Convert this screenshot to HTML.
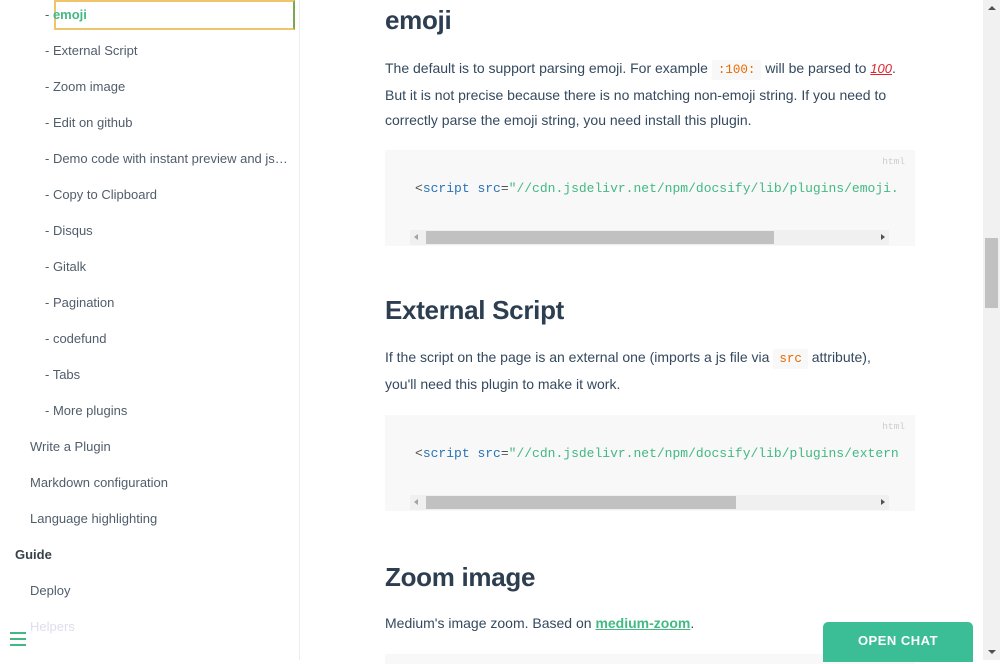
<!DOCTYPE html>
<html><head><meta charset="utf-8"><style>
*{margin:0;padding:0;box-sizing:border-box}
body{width:1000px;height:660px;overflow:hidden;background:#fff;font-family:"Liberation Sans",sans-serif;color:#34495e;position:relative}
.sb{position:absolute;left:0;top:0;width:300px;height:660px;border-right:1px solid #eee}
.it{position:absolute;font-size:13px;color:#505d6b;white-space:nowrap;line-height:16px}
.it.sub{left:45px}
.it.l2{left:30px}
.sel{position:absolute;left:54px;top:0;width:241px;height:30px;border:2px solid #f0c46b;border-right:2px solid #7aa850}
h2{position:absolute;left:385px;font-size:26px;font-weight:bold;color:#2c3e50;line-height:32px;letter-spacing:-0.3px}
p{position:absolute;left:385px;width:530px;font-size:14px;line-height:25px;color:#34495e}
code{font-family:"Liberation Mono",monospace;font-size:12.5px;color:#e96900;background:#f8f8f8;padding:3px 6px;border-radius:2px}
.pre{position:absolute;left:385px;width:530px;background:#f8f8f8}
.lang{position:absolute;right:10px;top:6px;font-size:9.5px;color:#ccc;font-family:"Liberation Mono",monospace}
.code{position:absolute;left:30px;font-family:"Liberation Mono",monospace;font-size:13px;white-space:nowrap;color:#525252}
.tg{color:#2973b7}.st{color:#42b983}
.hs{position:absolute;left:25px;width:479px;height:15px;background:#f0f0f0}
.hs .th{position:absolute;left:16px;top:1px;height:13px;background:#c1c1c1}
.hs .la{position:absolute;left:4px;top:4px;width:0;height:0;border-top:3.5px solid transparent;border-bottom:3.5px solid transparent;border-right:4px solid #a3a3a3}
.hs .ra{position:absolute;right:4px;top:4px;width:0;height:0;border-top:3.5px solid transparent;border-bottom:3.5px solid transparent;border-left:4px solid #505050}
a{color:#42b983;font-weight:bold;text-decoration:underline}
</style></head><body>
<div class="sb">
<div class="sel"></div>
<div class="it sub" style="top:7px">- <span style="color:#42b983;font-weight:bold">emoji</span></div>
<div class="it sub" style="top:43px">- External Script</div>
<div class="it sub" style="top:79px">- Zoom image</div>
<div class="it sub" style="top:115px">- Edit on github</div>
<div class="it sub" style="top:151px">- Demo code with instant preview and js…</div>
<div class="it sub" style="top:187px">- Copy to Clipboard</div>
<div class="it sub" style="top:223px">- Disqus</div>
<div class="it sub" style="top:259px">- Gitalk</div>
<div class="it sub" style="top:295px">- Pagination</div>
<div class="it sub" style="top:331px">- codefund</div>
<div class="it sub" style="top:367px">- Tabs</div>
<div class="it sub" style="top:403px">- More plugins</div>
<div class="it l2" style="top:439px">Write a Plugin</div>
<div class="it l2" style="top:475px">Markdown configuration</div>
<div class="it l2" style="top:511px">Language highlighting</div>
<div class="it" style="top:547px;left:15px;color:#364149;font-weight:bold;font-size:13px">Guide</div>
<div class="it l2" style="top:583px">Deploy</div>
<div class="it l2" style="top:619px;color:#dde">Helpers</div>
<div style="position:absolute;left:10px;top:632px;width:16px;height:2px;background:#42b983"></div>
<div style="position:absolute;left:10px;top:638px;width:16px;height:2px;background:#42b983"></div>
<div style="position:absolute;left:10px;top:644px;width:16px;height:2px;background:#42b983"></div>
</div>

<h2 style="top:4px">emoji</h2>
<p style="top:56px">The default is to support parsing emoji. For example <code>:100:</code> will be parsed to <span style="color:#e0242b;font-style:italic;font-size:13px;text-decoration:underline">100</span>.<br>But it is not precise because there is no matching non-emoji string. If you need to<br>correctly parse the emoji string, you need install this plugin.</p>
<div class="pre" style="top:150px;height:96px">
<div class="lang">html</div>
<div class="code" style="top:31px">&lt;<span class="tg">script</span> <span class="tg">src</span>=<span class="st">"//cdn.jsdelivr.net/npm/docsify/lib/plugins/emoji.</span></div>
<div class="hs" style="top:80px"><div class="la"></div><div class="th" style="width:348px"></div><div class="ra"></div></div>
</div>

<h2 style="top:294px">External Script</h2>
<p style="top:345px">If the script on the page is an external one (imports a js file via <code>src</code> attribute),<br>you'll need this plugin to make it work.</p>
<div class="pre" style="top:415px;height:96px">
<div class="lang">html</div>
<div class="code" style="top:31px">&lt;<span class="tg">script</span> <span class="tg">src</span>=<span class="st">"//cdn.jsdelivr.net/npm/docsify/lib/plugins/extern</span></div>
<div class="hs" style="top:80px"><div class="la"></div><div class="th" style="width:310px"></div><div class="ra"></div></div>
</div>

<h2 style="top:561px">Zoom image</h2>
<p style="top:611px">Medium's image zoom. Based on <a>medium-zoom</a>.</p>
<div class="pre" style="top:654px;height:10px"></div>

<div style="position:absolute;left:823px;top:622px;width:150px;height:40px;background:#3bbd96;border-radius:5px 5px 0 0;color:#fff;font-size:13px;font-weight:bold;text-align:center;line-height:38px;letter-spacing:0.5px">OPEN CHAT</div>

<div style="position:absolute;left:983px;top:0;width:17px;height:660px;background:#f1f1f1">
<div style="position:absolute;left:5px;top:6px;border-left:4px solid transparent;border-right:4px solid transparent;border-bottom:4px solid #505050"></div>
<div style="position:absolute;left:2px;top:238px;width:13px;height:70px;background:#c1c1c1"></div>
<div style="position:absolute;left:5px;top:650px;border-left:4px solid transparent;border-right:4px solid transparent;border-top:4px solid #505050"></div>
</div>
</body></html>
